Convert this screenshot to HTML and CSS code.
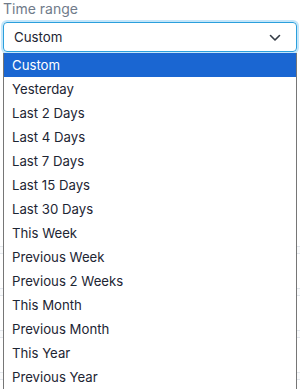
FILE: index.html
```html
<!DOCTYPE html>
<html>
<head>
<meta charset="utf-8">
<link rel="stylesheet" href="styles.css">
</head>
<body>
<div class="page">
  <div class="field">
    <div class="label">Time range</div>
    <div class="select">
      <span class="value">Custom</span>
      <svg class="chev" width="12" height="8" viewBox="0 0 12 8"><path d="M1.5 1.5 L6 6 L10.5 1.5" fill="none" stroke="#333a44" stroke-width="1.6" stroke-linecap="round" stroke-linejoin="round"/></svg>
    </div>
  </div>
  <div class="table">
    <div class="row"></div>
    <div class="row"></div>
    <div class="row"></div>
    <div class="row"></div>
  </div>
  <ul class="menu">
    <li class="opt selected">Custom</li>
    <li class="opt">Yesterday</li>
    <li class="opt">Last 2 Days</li>
    <li class="opt">Last 4 Days</li>
    <li class="opt">Last 7 Days</li>
    <li class="opt">Last 15 Days</li>
    <li class="opt">Last 30 Days</li>
    <li class="opt">This Week</li>
    <li class="opt">Previous Week</li>
    <li class="opt">Previous 2 Weeks</li>
    <li class="opt">This Month</li>
    <li class="opt">Previous Month</li>
    <li class="opt">This Year</li>
    <li class="opt">Previous Year</li>
  </ul>
</div>
</body>
</html>
```
FILE: styles.css
```css
html, body {
  margin: 0;
  padding: 0;
  background: #ffffff;
  overflow: hidden;
}
.page {
  position: relative;
  width: 300px;
  height: 389px;
  font-family: Inter, "Noto Sans", sans-serif;
}
.field {
  padding: 0 3px;
}
.label {
  font-size: 14px;
  line-height: 18px;
  color: #707b8a;
  height: 20px;
}
.select {
  box-sizing: border-box;
  height: 30px;
  margin-top: 2px;
  border: 1px solid #2b9fdc;
  border-radius: 4px;
  box-shadow: 0 0 0 2px #c4e6fa;
  display: flex;
  align-items: center;
  justify-content: space-between;
  padding: 0 15px 0 10px;
  font-size: 13.3px;
  color: #1d2533;
}
.chev {
  display: block;
  margin-top: 1px;
}
.table {
  margin-top: 194px;
  display: flex;
  flex-direction: column;
  gap: 34px;
}
.row {
  height: 6px;
  border-top: 1px solid #e3e7ec;
  border-bottom: 1px solid #e3e7ec;
  background: #fafbfc;
}
.menu {
  position: absolute;
  left: 3px;
  top: 53px;
  width: 294px;
  box-sizing: border-box;
  margin: 0;
  padding: 0;
  list-style: none;
  border: 1px solid #767676;
  border-top: none;
  background: #fff;
}
.opt {
  height: 24px;
  line-height: 25px;
  padding-left: 8px;
  font-size: 13.2px;
  color: #1d2533;
}
.opt.selected {
  background: #1a66d2;
  color: #ffffff;
}
```
